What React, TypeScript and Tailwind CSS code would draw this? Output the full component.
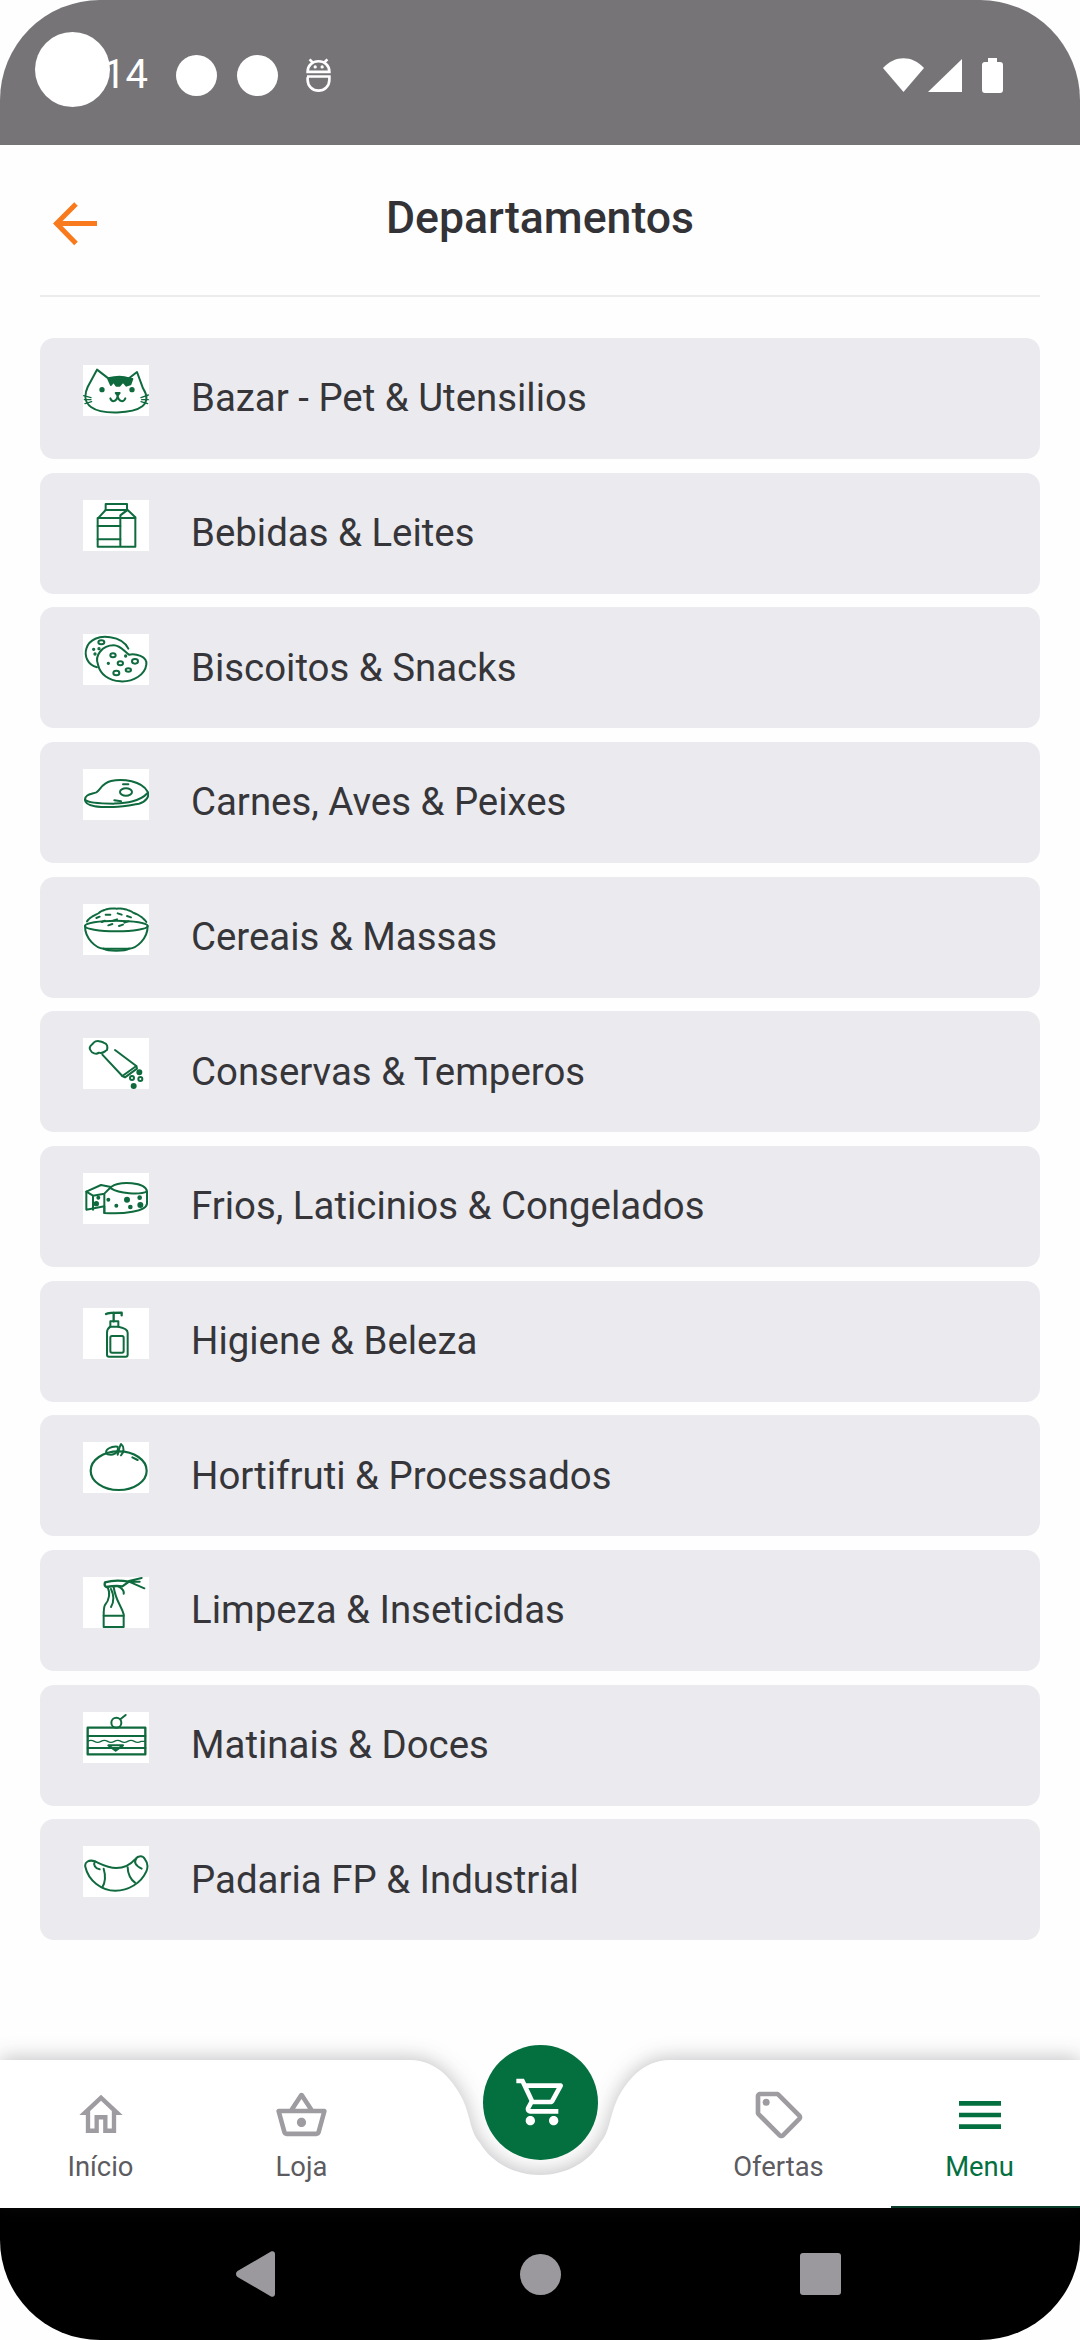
import type { ReactNode } from 'react';

const departments: { name: string; icon: ReactNode }[] = [
  {
    name: 'Bazar - Pet & Utensilios',
    icon: (
      <>
        <path d="M14 66 L42 14 L76 40 C98 34 122 34 138 40 L162 21 L180 70 C194 92 194 110 178 124 C150 146 56 150 24 126 C4 112 4 88 14 66 Z" />
        <path d="M76 42 C96 38 122 38 148 42 L142 58 L130 62 L120 50 L110 62 L100 62 L92 50 L84 60 Z" fill="currentColor" />
        <circle cx="57" cy="74" r="5" fill="currentColor" />
        <circle cx="147" cy="74" r="5" fill="currentColor" />
        <path d="M98 84 H110 L104 92 Z" fill="currentColor" />
        <path d="M82 100 C86 112 100 112 104 94 C108 112 122 112 127 100" />
        <path d="M2 92 L24 98 M4 104 L24 104 M6 116 L26 110 M196 90 L174 98 M196 104 L176 104 M194 116 L174 110" strokeWidth="4" />
      </>
    ),
  },
  {
    name: 'Bebidas & Leites',
    icon: (
      <>
        <path d="M68 12 H132 V30 H68 Z" />
        <path d="M44 140 V56 L68 30 H132 L112 46 V140 Z M112 46 L134 30 L157 52 V140 H112" />
        <path d="M44 54 H112 M44 78 H112 M44 118 H112 M112 54 H157" />
      </>
    ),
  },
  {
    name: 'Biscoitos & Snacks',
    icon: (
      <>
        <path d="M42 100 C12 92 4 64 10 44 C18 16 50 4 82 10 C110 14 128 28 136 44" />
        <path d="M45 92 C34 64 58 34 92 34 C112 34 122 50 138 62 C156 58 194 66 190 92 C186 122 152 144 112 142 C78 140 52 122 45 92 Z" />
        <ellipse cx="90" cy="64" rx="8" ry="6" />
        <ellipse cx="112" cy="88" rx="8" ry="6" />
        <ellipse cx="156" cy="82" rx="9" ry="7" />
        <ellipse cx="136" cy="108" rx="8" ry="5" />
        <ellipse cx="100" cy="117" rx="9" ry="7" />
        <ellipse cx="55" cy="25" rx="9" ry="6" />
        <circle cx="48" cy="44" r="2" fill="currentColor" />
        <circle cx="32" cy="46" r="2" fill="currentColor" />
        <circle cx="36" cy="60" r="2" fill="currentColor" />
        <circle cx="76" cy="88" r="2" fill="currentColor" />
        <circle cx="128" cy="66" r="2" fill="currentColor" />
      </>
    ),
  },
  {
    name: 'Carnes, Aves & Peixes',
    icon: (
      <>
        <path d="M6 92 C6 76 24 76 40 70 C52 64 56 42 84 36 C120 28 176 36 194 68 C200 82 190 98 168 104 C136 110 118 114 92 114 C64 114 6 116 6 92 Z" />
        <path d="M6 92 C14 102 58 104 92 104 C124 102 168 100 194 72" />
        <ellipse cx="129" cy="69" rx="18" ry="11" />
        <path d="M120 46 H136 M94 94 L114 97" />
      </>
    ),
  },
  {
    name: 'Cereais & Massas',
    icon: (
      <>
        <ellipse cx="100" cy="66" rx="94" ry="16" />
        <path d="M6 66 C6 104 38 132 62 134 H138 C162 132 194 104 194 66" />
        <path d="M62 134 C74 142 126 142 138 134" />
        <path d="M12 52 C22 38 36 34 46 28 C60 16 82 12 100 14 C118 12 140 18 150 26 C166 32 180 40 190 54" strokeDasharray="8 3" />
        <path d="M40 42 L50 38 M68 32 L82 32 M104 28 L116 32 M132 36 L144 40 M56 54 L66 50 M90 50 L102 46 M124 56 L136 52 M76 64 L88 60 M108 66 L120 62" />
      </>
    ),
  },
  {
    name: 'Conservas & Temperos',
    icon: (
      <>
        <path d="M22 36 C14 24 30 20 32 14 C40 6 56 10 62 14 C74 16 74 28 72 36 C62 42 58 48 48 44 C40 50 26 46 22 36 Z" />
        <path d="M58 50 L118 114 L160 84 L96 36" />
        <path d="M118 114 L126 118 L162 92 L160 84" />
        <circle cx="169" cy="103" r="6" fill="currentColor" />
        <circle cx="172" cy="123" r="6" />
        <circle cx="147" cy="120" r="6" />
        <circle cx="152" cy="144" r="6" fill="currentColor" />
      </>
    ),
  },
  {
    name: 'Frios, Laticinios & Congelados',
    icon: (
      <>
        <path d="M10 56 L54 36 L84 42 C110 24 188 26 192 56 V92 C190 116 120 124 64 120 V100 L10 110 Z" />
        <path d="M10 56 L30 68 V110 M30 68 L64 62 L84 42 M64 62 V120" />
        <path d="M84 46 C108 62 170 66 192 56" />
        <circle cx="46" cy="74" r="3" fill="currentColor" />
        <circle cx="40" cy="92" r="5" fill="currentColor" />
        <circle cx="76" cy="80" r="3" fill="currentColor" />
        <circle cx="100" cy="98" r="3" fill="currentColor" />
        <circle cx="132" cy="80" r="6" fill="currentColor" />
        <circle cx="170" cy="74" r="4" fill="currentColor" />
        <circle cx="142" cy="102" r="4" fill="currentColor" />
        <circle cx="172" cy="96" r="6" fill="currentColor" />
      </>
    ),
  },
  {
    name: 'Higiene & Beleza',
    icon: (
      <>
        <path d="M69 18 C76 14 104 14 116 14 V22 M92 14 V40" strokeWidth="7" />
        <path d="M82 40 H106 V56 H82 Z" />
        <path d="M82 56 C76 60 72 66 72 74 V140 C72 144 74 146 78 146 H128 C132 146 134 144 134 140 V74 C134 66 128 60 106 56" />
        <rect x="82" y="84" width="40" height="50" rx="5" />
      </>
    ),
  },
  {
    name: 'Hortifruti & Processados',
    icon: (
      <>
        <ellipse cx="107" cy="86" rx="84" ry="58" strokeWidth="6.5" />
        <path d="M70 34 C66 22 84 12 104 14 C108 24 100 38 84 38 C78 38 72 38 70 34 Z" />
        <path d="M104 38 C108 24 110 12 114 6 C124 14 124 30 114 40" />
        <path d="M148 46 L164 54" />
      </>
    ),
  },
  {
    name: 'Limpeza & Inseticidas',
    icon: (
      <>
        <path d="M66 16 C92 8 116 10 138 14 M70 30 C92 26 104 26 118 28 L138 14 M66 16 C64 22 66 28 70 30" strokeWidth="7" />
        <path d="M138 14 L184 34 M138 12 L176 3 M138 14 L170 14" />
        <path d="M106 28 C120 36 124 42 122 50" />
        <path d="M74 30 C84 54 76 72 66 84 C62 90 62 98 62 116 V150 H122 V112 C116 88 98 72 92 30" />
        <path d="M84 36 C94 56 92 76 84 90 M62 116 H122" />
      </>
    ),
  },
  {
    name: 'Matinais & Doces',
    icon: (
      <>
        <circle cx="100" cy="32" r="15" />
        <path d="M112 22 L128 9" />
        <rect x="14" y="47" width="173" height="80" strokeWidth="7" />
        <path d="M14 72 H187 M14 108 H187" strokeWidth="6" />
        <path d="M14 88 Q24 82 34 88 T54 88 T74 88 T94 88 T114 88 T134 88 T154 88 T174 88 L187 88" strokeWidth="4" />
        <path d="M76 100 H120 L98 116 Z" />
      </>
    ),
  },
  {
    name: 'Padaria FP & Industrial',
    icon: (
      <>
        <path d="M7 62 C4 48 18 40 36 46 C54 54 74 66 100 66 C126 66 142 56 156 40 C166 28 180 28 186 40 C194 50 196 62 190 76 C174 112 136 134 97 134 C56 134 16 104 7 62 Z" />
        <path d="M62 68 C68 88 66 110 58 124 M134 64 C134 84 144 102 156 110" />
        <path d="M36 46 C30 56 36 68 50 70 M160 38 C152 48 156 58 176 68" />
      </>
    ),
  },
];

function Tab({ label, active, children }: { label: string; active?: boolean; children: ReactNode }) {
  return (
    <div className="relative flex w-[201px] flex-col items-center pt-[27px]">
      <div className={`flex h-[56px] items-center justify-center ${active ? 'text-[#04703f]' : 'text-[#9e9ca0]'}`}>
        {children}
      </div>
      <span className={`mt-[8px] text-[27.4px] leading-[32px] ${active ? 'text-[#04703f]' : 'text-[#5c5b5f]'}`}>{label}</span>
      {active && <div className="absolute bottom-0 left-[12px] right-0 h-[2px] bg-[#0a3d2a]" />}
    </div>
  );
}

export default function App() {
  return (
    <div className="flex h-[2340px] w-[1080px] flex-col overflow-hidden bg-[#fefefe] font-['Roboto',sans-serif]">
      {/* status bar */}
      <div className="relative flex h-[145px] shrink-0 items-center rounded-t-[100px] bg-[#767477] pl-[103px] pr-[77px] pt-[5px] text-white">
        <div className="absolute left-[35px] top-[32px] h-[75px] w-[75px] rounded-full bg-white" />
        <span className="w-[73px] text-[40px] leading-none">14</span>
        <div className="h-[41px] w-[41px] rounded-full bg-white" />
        <div className="ml-[20px] h-[41px] w-[41px] rounded-full bg-white" />
        <svg className="ml-[28px]" width="25" height="34" viewBox="0 0 74 103" fill="none" stroke="currentColor" strokeWidth="8">
          <path d="M4 42 C4 22 20 10 37 10 C54 10 70 22 70 42 Z" />
          <path d="M10 4 L20 14 M64 4 L54 14" />
          <circle cx="27" cy="27" r="5" fill="currentColor" stroke="none" />
          <circle cx="48" cy="27" r="5" fill="currentColor" stroke="none" />
          <path d="M2 56 H70 V66 C70 86 54 99 37 99 C20 99 4 86 4 66 V58" />
        </svg>
        <div className="ml-auto flex items-center">
          <svg width="41" height="34" viewBox="0 0 41 34" fill="currentColor">
            <path d="M0 10 C12 -3 29 -3 41 10 L20.5 34 Z" />
          </svg>
          <svg className="ml-[4px]" width="34" height="33" viewBox="0 0 34 33" fill="currentColor">
            <path d="M34 0 V33 H0 Z" />
          </svg>
          <svg className="ml-[20px]" width="21" height="35" viewBox="0 0 21 35" fill="currentColor">
            <path d="M6 0 H15 V4 H18 C20 4 21 5 21 7 V32 C21 34 20 35 18 35 H3 C1 35 0 34 0 32 V7 C0 5 1 4 3 4 H6 Z" />
          </svg>
        </div>
      </div>

      {/* header */}
      <header className="mx-[40px] grid h-[152px] shrink-0 grid-cols-[1fr_auto_1fr] border-b-2 border-[#ebebec] pt-[47px]">
        <svg className="ml-[13px] mt-[10px]" width="44" height="44" viewBox="0 0 44 44" fill="none" stroke="#f97a1c" strokeWidth="5">
          <path d="M44 21.5 H4" />
          <path d="M23 2 L3.5 21.5 L23 41.5" />
        </svg>
        <h1 className="text-[44.6px] font-medium leading-[52px] text-[#333337]">Departamentos</h1>
        <div />
      </header>

      {/* departments */}
      <main className="mx-[40px] mt-[41px] flex flex-1 flex-col gap-[13.67px]">
        {departments.map((d) => (
          <div key={d.name} className="flex h-[121px] shrink-0 items-center rounded-[14px] bg-[#ebebef] pl-[43px]">
            <svg className="mb-[16px] shrink-0 bg-white text-[#0f6a3e]" width="66" height="51" viewBox="0 0 198 153" fill="none" stroke="currentColor" strokeWidth="6" strokeLinecap="round" strokeLinejoin="round">
              {d.icon}
            </svg>
            <span className="ml-[42px] text-[38.4px] leading-none text-[#36363a]">{d.name}</span>
          </div>
        ))}
      </main>

      {/* bottom navigation */}
      <nav className="relative flex h-[148px] shrink-0">
        <svg className="absolute inset-0 overflow-visible drop-shadow-[0_-2px_10px_rgba(40,40,50,0.28)]" width="1080" height="148" viewBox="0 0 1080 148" fill="#ffffff">
          <path d="M0 0 H410 C438 0 454 22 463 40 C471 58 470 72 480 83 C492 103 515 115 540 115 C565 115 588 103 600 83 C610 72 609 58 617 40 C626 22 642 0 670 0 H1080 V148 H0 Z" />
        </svg>
        <Tab label="Início">
          <svg width="52" height="54" viewBox="0 0 24 24" preserveAspectRatio="none" fill="currentColor">
            <path d="M12 5.69l5 4.5V18h-2v-6H9v6H7v-7.81l5-4.5M12 3L2 12h3v8h6v-6h2v6h6v-8h3L12 3z" />
          </svg>
        </Tab>
        <Tab label="Loja">
          <svg width="55" height="55" viewBox="0 0 24 24" fill="currentColor">
            <path d="M22 9h-4.79l-4.38-6.56c-.19-.28-.51-.42-.83-.42s-.64.14-.83.43L6.79 9H2c-.55 0-1 .45-1 1 0 .09.01.18.04.27l2.54 9.27c.23.84 1 1.46 1.92 1.46h13c.92 0 1.69-.62 1.93-1.46l2.54-9.27L23 10c0-.55-.45-1-1-1zM12 4.8L14.8 9H9.2L12 4.8zM18.5 19l-12.99.01L3.31 11H20.7l-2.2 8zM12 13c-1.1 0-2 .9-2 2s.9 2 2 2 2-.9 2-2-.9-2-2-2z" />
          </svg>
        </Tab>
        <div className="flex-1" />
        <Tab label="Ofertas">
          <svg width="56" height="56" viewBox="0 0 24 24" fill="currentColor">
            <path d="M21.41 11.58l-9-9C12.05 2.22 11.55 2 11 2H4c-1.1 0-2 .9-2 2v7c0 .55.22 1.05.59 1.42l9 9c.36.36.86.58 1.41.58s1.05-.22 1.41-.59l7-7c.37-.36.59-.86.59-1.41s-.23-1.06-.59-1.42zM13 20.01L4 11V4h7v-.01l9 9-7 7.02z" />
            <circle cx="6.5" cy="6.5" r="1.5" />
          </svg>
        </Tab>
        <Tab label="Menu" active>
          <svg width="56" height="56" viewBox="0 0 24 24" fill="currentColor">
            <path d="M3 18h18v-2H3v2zm0-5h18v-2H3v2zm0-7v2h18V6H3z" />
          </svg>
        </Tab>
        <div className="absolute left-[483px] top-[-15px] flex h-[115px] w-[115px] items-center justify-center rounded-full bg-[#04703f] text-white">
          <svg className="ml-[3px] mt-[-2px]" width="56" height="56" viewBox="0 0 24 24" fill="currentColor">
            <path d="M15.55 13c.75 0 1.41-.41 1.75-1.03l3.58-6.49c.37-.66-.11-1.48-.87-1.48H5.21l-.94-2H1v2h2l3.6 7.59-1.35 2.44C4.52 15.37 5.48 17 7 17h12v-2H7l1.1-2h7.45zM6.16 6h12.15l-2.76 5H8.53L6.16 6zM7 18c-1.1 0-1.99.9-1.99 2S5.9 22 7 22s2-.9 2-2-.9-2-2-2zm10 0c-1.1 0-1.99.9-1.99 2s.89 2 1.99 2 2-.9 2-2-.9-2-2-2z" />
          </svg>
        </div>
      </nav>

      {/* android navigation */}
      <div className="flex h-[132px] shrink-0 items-center rounded-b-[100px] bg-black pl-[236px]">
        <svg width="39" height="46" viewBox="0 0 39 46" fill="#9b999d">
          <path d="M35 0.5 C37.5 -0.5 39 1 39 3 V43 C39 45 37.5 46.5 35 45.5 L1.5 26 C-0.5 24.5 -0.5 21.5 1.5 20 Z" />
        </svg>
        <div className="ml-[245px] h-[41px] w-[41px] rounded-full bg-[#9b999d]" />
        <div className="ml-[239px] h-[42px] w-[41px] rounded-[3px] bg-[#9b999d]" />
      </div>
    </div>
  );
}
